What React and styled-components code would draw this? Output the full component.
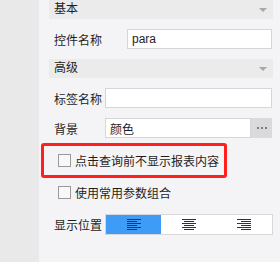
import React from "react";
import styled, { createGlobalStyle } from "styled-components";

const Global = createGlobalStyle`
  html, body { margin: 0; padding: 0; background: #f4f4f6; }
  body { font-family: "Liberation Sans", "Noto Sans CJK SC", sans-serif; font-size: 12px; color: #1e1e1e; }
`;

const Frame = styled.div`
  display: flex;
  width: 280px;
  height: 262px;
  overflow: hidden;
`;

const Strip = styled.div`
  width: 39px;
  flex: none;
  background: #e9e9ea;
`;

const Panel = styled.div`
  flex: 1;
  background: #f4f4f6;
  padding: 0 7px 0 10px;
  display: flex;
  flex-direction: column;
`;

const Header = styled.div`
  height: 19px;
  background: #ebebec;
  display: flex;
  align-items: center;
  justify-content: space-between;
  padding: 0 6px 0 5px;
  margin-top: ${(p) => p.$top || 0}px;
  line-height: 19px;
`;

const Caret = styled.span`
  width: 0;
  height: 0;
  border-left: 4px solid transparent;
  border-right: 4px solid transparent;
  border-top: 4px solid #a8a8a8;
`;

const Row = styled.div`
  display: flex;
  align-items: center;
  height: ${(p) => p.$h || 20}px;
  margin-top: ${(p) => p.$top || 0}px;
`;

const Label = styled.div`
  width: ${(p) => p.$w}px;
  flex: none;
  padding-left: 5px;
  box-sizing: border-box;
  white-space: nowrap;
`;

const Input = styled.div`
  flex: 1;
  height: 20px;
  box-sizing: border-box;
  background: #fff;
  border: 1px solid #d6d6d8;
  padding-left: 4px;
  display: flex;
  align-items: center;
  margin-right: ${(p) => p.$mr || 0}px;
`;

const MoreButton = styled.div`
  width: 21px;
  height: 20px;
  flex: none;
  background: #dadadd;
  display: flex;
  align-items: center;
  justify-content: center;
  gap: 2px;
  margin-right: 1px;
`;

const Dot = styled.span`
  width: 2px;
  height: 2px;
  background: #7c7c80;
`;

const Highlight = styled.div`
  margin: 5px 0 0 -8px;
  width: 186px;
  height: 35px;
  box-sizing: border-box;
  border: 3px solid #ff1f1f;
  border-radius: 3px;
  display: flex;
  align-items: center;
  padding-left: 14px;
`;

const CheckRow = styled.label`
  display: flex;
  align-items: center;
  gap: 4px;
  height: 20px;
  white-space: nowrap;
  margin: ${(p) => (p.$plain ? "4px 0 0 9px" : "0")};
`;

const Box = styled.span`
  width: 13px;
  height: 13px;
  box-sizing: border-box;
  border: 1px solid #9a9a9a;
  background: #f8f8f9;
  flex: none;
`;

const Segmented = styled.div`
  flex: 1;
  display: flex;
  height: 21px;
  box-sizing: border-box;
  border: 1px solid #d8d8da;
  background: #fff;
`;

const Seg = styled.div`
  flex: 1;
  display: flex;
  align-items: center;
  justify-content: center;
  background: ${(p) => (p.$active ? "#3e9bf6" : "#fff")};
`;

function AlignIcon({ kind }) {
  const widths = [14, 10, 14, 10, 14, 10];
  return (
    <svg width="14" height="12" viewBox="0 0 14 12">
      {widths.map((w, i) => {
        const x = kind === "left" ? 0 : kind === "center" ? (14 - w) / 2 : 14 - w;
        return <rect key={i} x={x} y={i * 2} width={w} height="1" fill="#333" />;
      })}
    </svg>
  );
}

export default function App() {
  return (
    <>
      <Global />
      <Frame>
        <Strip />
        <Panel>
          <Header>
            <span>基本</span>
            <Caret />
          </Header>
          <Row $top={10}>
            <Label $w={78}>控件名称</Label>
            <Input $mr={1}>para</Input>
          </Row>
          <Header $top={10}>
            <span>高级</span>
            <Caret />
          </Header>
          <Row $top={10}>
            <Label $w={56}>标签名称</Label>
            <Input $mr={1} />
          </Row>
          <Row $top={10}>
            <Label $w={56}>背景</Label>
            <Input>颜色</Input>
            <MoreButton>
              <Dot />
              <Dot />
              <Dot />
            </MoreButton>
          </Row>
          <Highlight>
            <CheckRow>
              <Box />
              点击查询前不显示报表内容
            </CheckRow>
          </Highlight>
          <CheckRow $plain>
            <Box />
            使用常用参数组合
          </CheckRow>
          <Row $top={12} $h={21}>
            <Label $w={56}>显示位置</Label>
            <Segmented>
              <Seg $active>
                <AlignIcon kind="left" />
              </Seg>
              <Seg>
                <AlignIcon kind="center" />
              </Seg>
              <Seg>
                <AlignIcon kind="right" />
              </Seg>
            </Segmented>
          </Row>
        </Panel>
      </Frame>
    </>
  );
}
